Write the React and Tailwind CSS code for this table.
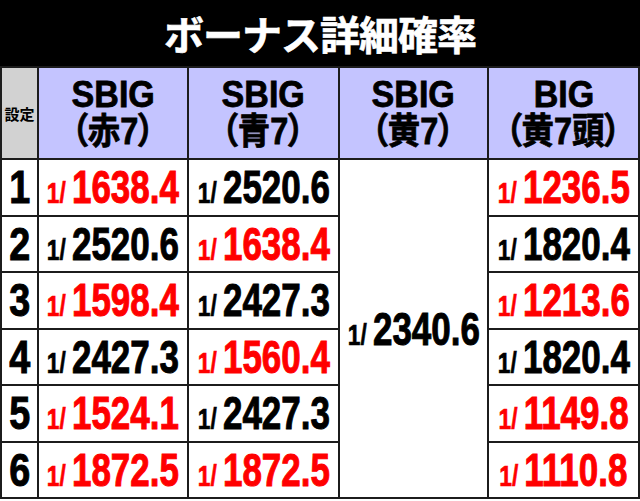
const NUM = "font-['Liberation_Sans','Noto_Sans_CJK_JP',sans-serif] font-bold";

const rows = [
  { n: "1", a: ["1638.4", true], b: ["2520.6", false], d: ["1236.5", true] },
  { n: "2", a: ["2520.6", false], b: ["1638.4", true], d: ["1820.4", false] },
  { n: "3", a: ["1598.4", true], b: ["2427.3", false], d: ["1213.6", true] },
  { n: "4", a: ["2427.3", false], b: ["1560.4", true], d: ["1820.4", false] },
  { n: "5", a: ["1524.1", true], b: ["2427.3", false], d: ["1149.8", true] },
  { n: "6", a: ["1872.5", true], b: ["1872.5", true], d: ["1110.8", true] },
];

function Prob({ value, red }) {
  return (
    <div className={`flex items-baseline justify-center shrink-0 scale-x-[0.76] [-webkit-text-stroke:1px_currentColor] ${NUM} ${red ? "text-[#ff0000]" : "text-black"}`}>
      <span className="text-[30px] leading-none mr-[8px] [-webkit-text-stroke:0.6px_currentColor]">1/</span>
      <span className="text-[46px] leading-none">{value}</span>
    </div>
  );
}

function Head({ top, bottom }) {
  return (
    <div className={`bg-[#c4c4ff] flex flex-col items-center justify-center ${NUM} text-black [font-feature-settings:'palt'] [-webkit-text-stroke:0.8px_currentColor]`}>
      <span className="text-[37px] leading-[36px] pt-[2px] scale-x-[0.92]">{top}</span>
      <span className="text-[36px] leading-[38px] scale-x-[0.9]">{bottom}</span>
    </div>
  );
}

export default function App() {
  return (
    <div className="w-[640px] h-[501px] bg-white">
      <div className="h-[66px] bg-black flex items-center justify-center">
        <h1 className="text-white text-[40px] font-bold font-['Noto_Sans_CJK_JP',sans-serif] leading-none tracking-[-1px] [-webkit-text-stroke:0.6px_currentColor]">
          ボーナス詳細確率
        </h1>
      </div>
      <div className="grid grid-cols-[35px_148px_149px_147px_149px] grid-rows-[90px_repeat(6,54.5px)] gap-[2px] p-[2px] bg-[#1c1c1c]">
        <div className="bg-[#d2d2d2] flex items-center justify-center">
          <span className="text-[15px] font-bold leading-none font-['Noto_Sans_CJK_JP',sans-serif] text-black">設定</span>
        </div>
        <Head top="SBIG" bottom="（赤7）" />
        <Head top="SBIG" bottom="（青7）" />
        <Head top="SBIG" bottom="（黄7）" />
        <Head top="BIG" bottom="（黄7頭）" />

        {rows.map((r, i) => (
          <div key={r.n} className="contents">
            <div className={`bg-white flex items-center justify-center ${NUM} text-[46px] leading-none text-black [-webkit-text-stroke:1px_currentColor]`}>
              <span className="scale-x-[0.82]">{r.n}</span>
            </div>
            <div className="bg-white flex items-center justify-center overflow-hidden">
              <Prob value={r.a[0]} red={r.a[1]} />
            </div>
            <div className="bg-white flex items-center justify-center overflow-hidden">
              <Prob value={r.b[0]} red={r.b[1]} />
            </div>
            {i === 0 && (
              <div className="bg-white row-span-6 flex items-center justify-center overflow-hidden">
                <Prob value="2340.6" red={false} />
              </div>
            )}
            <div className="bg-white flex items-center justify-center overflow-hidden">
              <Prob value={r.d[0]} red={r.d[1]} />
            </div>
          </div>
        ))}
      </div>
    </div>
  );
}
